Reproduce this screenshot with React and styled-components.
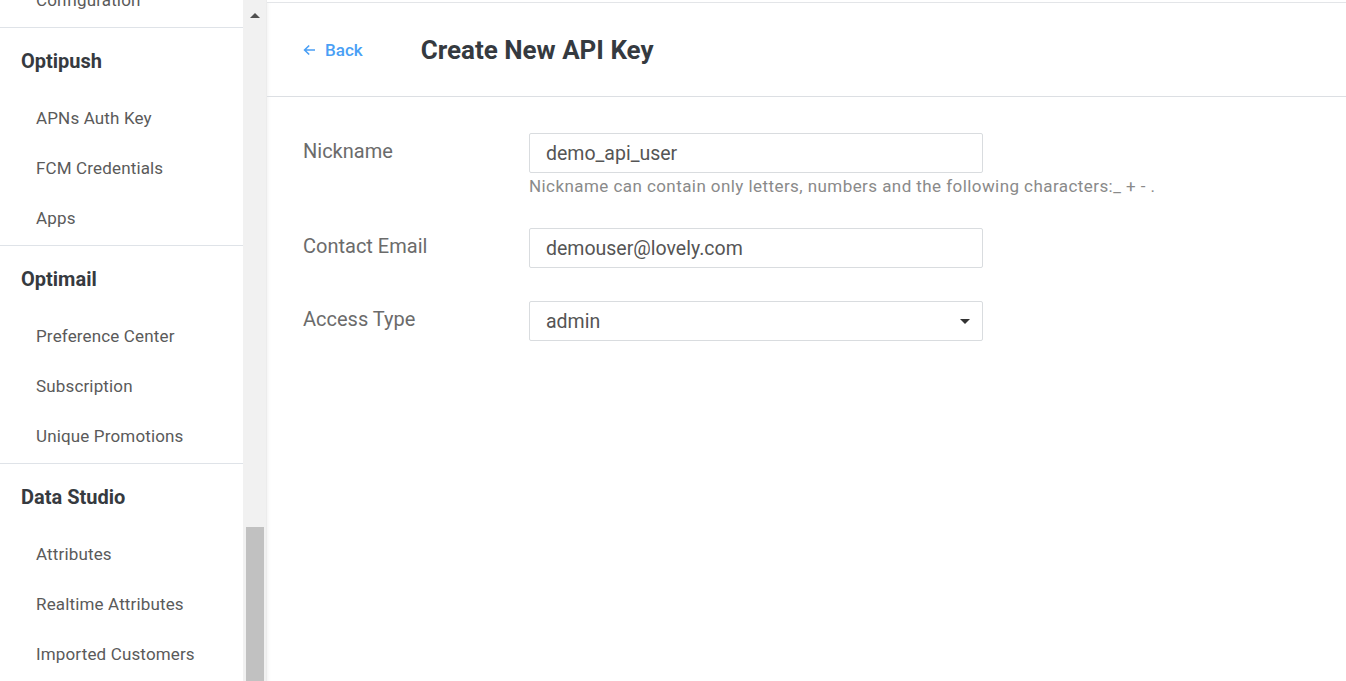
import React from 'react';
import styled, { createGlobalStyle } from 'styled-components';

const GlobalStyle = createGlobalStyle`
  * { box-sizing: border-box; }
  body {
    margin: 0;
    background: #fff;
    font-family: Roboto, "Liberation Sans", Arial, sans-serif;
  }
`;

const sections = [
  { title: 'Optipush', items: ['APNs Auth Key', 'FCM Credentials', 'Apps'] },
  { title: 'Optimail', items: ['Preference Center', 'Subscription', 'Unique Promotions'] },
  { title: 'Data Studio', items: ['Attributes', 'Realtime Attributes', 'Imported Customers'] },
];

const App = () => {
  return (
    <Page>
      <GlobalStyle />
      <Sidebar>
        <Nav>
          <Section $clipped>
            <NavItem>Configuration</NavItem>
          </Section>
          {sections.map((s) => (
            <Section key={s.title}>
              <SectionTitle>{s.title}</SectionTitle>
              {s.items.map((item) => (
                <NavItem key={item}>{item}</NavItem>
              ))}
            </Section>
          ))}
        </Nav>
        <ScrollTrack>
          <ScrollArrow />
          <ScrollSpace />
          <ScrollThumb />
        </ScrollTrack>
      </Sidebar>

      <Main>
        <Header>
          <BackLink href="#">
            <svg width="13" height="12" viewBox="0 0 13 12" fill="none">
              <path d="M12 6H1.8M6.2 1.5L1.6 6l4.6 4.5" stroke="#4a9ff5" strokeWidth="1.6" />
            </svg>
            Back
          </BackLink>
          <Title>Create New API Key</Title>
        </Header>

        <Form>
          <Row>
            <Label>Nickname</Label>
            <Field>
              <Input defaultValue="demo_api_user" />
              <Hint>Nickname can contain only letters, numbers and the following characters:_ + - .</Hint>
            </Field>
          </Row>
          <Row>
            <Label>Contact Email</Label>
            <Field>
              <Input defaultValue="demouser@lovely.com" />
            </Field>
          </Row>
          <Row>
            <Label>Access Type</Label>
            <Field>
              <Select>
                <span>admin</span>
                <Caret />
              </Select>
            </Field>
          </Row>
        </Form>
      </Main>
    </Page>
  );
};

const Page = styled.div`
  display: flex;
  height: 100vh;
  overflow: hidden;
`;

const Sidebar = styled.aside`
  display: flex;
  flex: 0 0 267px;
  height: 100%;
`;

const Nav = styled.nav`
  width: 243px;
  height: 100%;
  overflow: hidden;
`;

const Section = styled.div`
  padding-bottom: 2px;
  border-bottom: 1px solid #dfe3e8;
  margin-top: ${(p) => (p.$clipped ? '-25px' : '0')};
`;

const SectionTitle = styled.div`
  height: 65px;
  display: flex;
  align-items: center;
  padding-left: 21px;
  font-size: 20px;
  font-weight: 700;
  color: #363a3f;
`;

const NavItem = styled.div`
  height: 50px;
  display: flex;
  align-items: center;
  padding-left: 36px;
  font-size: 17px;
  letter-spacing: 0.15px;
  color: #5a5a5a;
  white-space: nowrap;
`;

const ScrollTrack = styled.div`
  width: 24px;
  display: flex;
  flex-direction: column;
  background: #f1f1f1;
  border-right: 1px solid #ececec;
`;

const ScrollArrow = styled.div`
  height: 30px;
  display: flex;
  align-items: center;
  justify-content: center;

  &::before {
    content: '';
    border-left: 5px solid transparent;
    border-right: 5px solid transparent;
    border-bottom: 5px solid #505050;
  }
`;

const ScrollSpace = styled.div`
  flex: 1;
`;

const ScrollThumb = styled.div`
  height: 154px;
  margin: 0 2px 0 3px;
  background: #c1c1c1;
`;

const Main = styled.main`
  flex: 1;
  margin-top: 2px;
  border-top: 1px solid #e3e5e8;
  box-shadow: inset 4px 0 4px -4px rgba(0, 0, 0, 0.08);
`;

const Header = styled.header`
  height: 94px;
  display: flex;
  align-items: center;
  padding-left: 36px;
  border-bottom: 1px solid #dcdfe3;
`;

const BackLink = styled.a`
  display: flex;
  align-items: center;
  gap: 9px;
  margin-right: 58px;
  font-size: 17px;
  font-weight: 500;
  color: #4a9ff5;
  text-decoration: none;
`;

const Title = styled.h1`
  margin: 0;
  font-size: 26px;
  font-weight: 700;
  color: #353a40;
`;

const Form = styled.div`
  display: flex;
  flex-direction: column;
  gap: 33px;
  padding: 36px 0 0 36px;
`;

const Row = styled.div`
  display: grid;
  grid-template-columns: 226px 454px;
`;

const Label = styled.div`
  padding-top: 6px;
  line-height: 24px;
  font-size: 20px;
  color: #6b6b6b;
`;

const Field = styled.div`
  display: flex;
  flex-direction: column;
`;

const Input = styled.input`
  height: 40px;
  width: 100%;
  padding: 0 16px;
  border: 1px solid #d9dcdf;
  border-radius: 2px;
  font-family: inherit;
  font-size: 19.5px;
  color: #555;
  outline: none;
`;

const Select = styled.div`
  height: 40px;
  display: flex;
  align-items: center;
  justify-content: space-between;
  padding: 0 12px 0 16px;
  border: 1px solid #d9dcdf;
  border-radius: 2px;
  font-size: 19.5px;
  color: #555;
`;

const Caret = styled.span`
  border-left: 5px solid transparent;
  border-right: 5px solid transparent;
  border-top: 5px solid #333;
`;

const Hint = styled.div`
  margin-top: 5px;
  line-height: 17px;
  font-size: 17px;
  letter-spacing: 0.43px;
  color: #8a8a8a;
  white-space: nowrap;
`;

export default App;
